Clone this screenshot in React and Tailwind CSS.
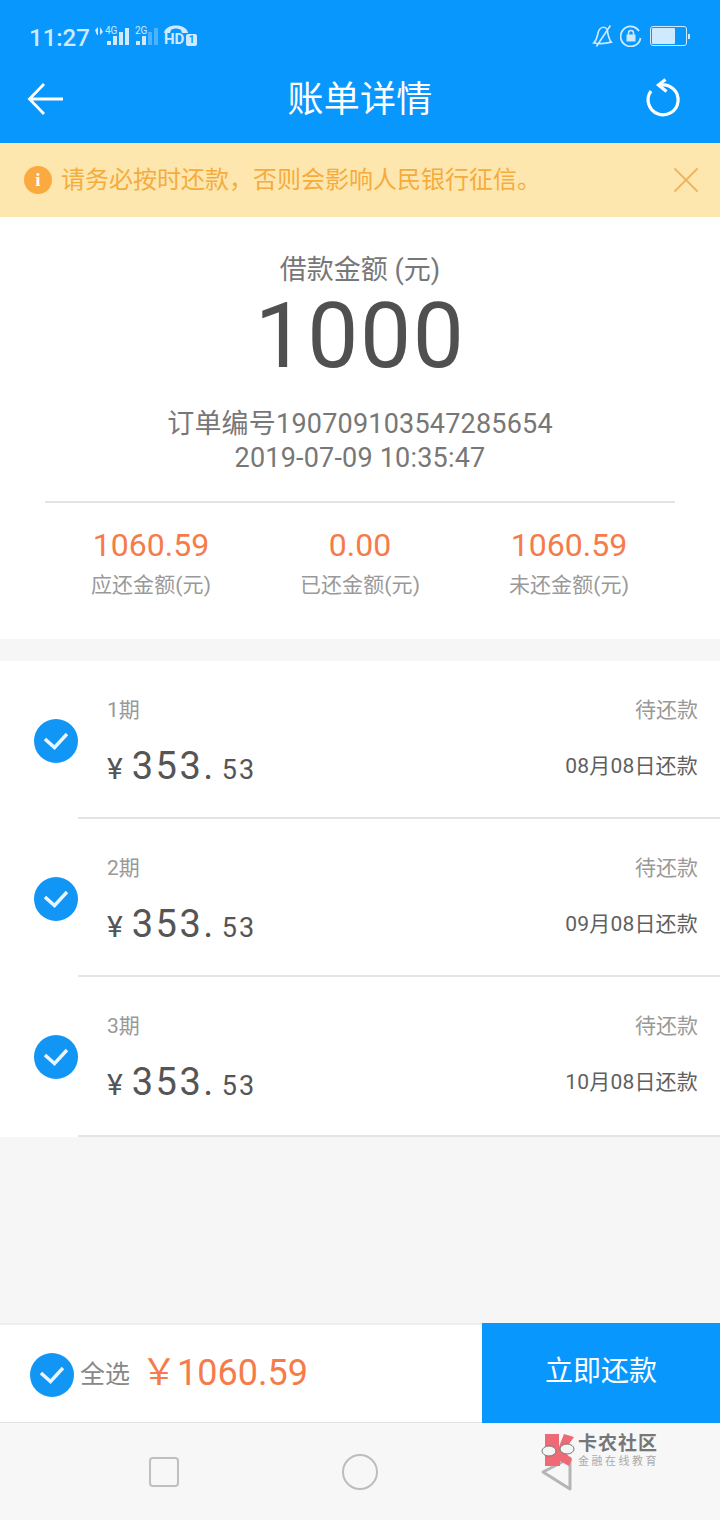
import React from 'react'
import { X } from 'lucide-react'

const periods = [
    { name: '1期', date: '08月08日还款' },
    { name: '2期', date: '09月08日还款' },
    { name: '3期', date: '10月08日还款' },
]

const summary = [
    { value: '1060.59', label: '应还金额(元)' },
    { value: '0.00', label: '已还金额(元)' },
    { value: '1060.59', label: '未还金额(元)' },
]

function CheckDot() {
    return (
        <div className="w-[44px] h-[44px] rounded-full bg-[#1196f5] flex items-center justify-center shrink-0">
            <svg width="24" height="18" viewBox="0 0 24 18" fill="none">
                <path d="M1 7 L10.5 15.5 L23 2" stroke="#e8f5ff" strokeWidth="3.4" />
            </svg>
        </div>
    )
}

function Signal({ levels }) {
    const heights = [4, 9, 13, 17]
    return (
        <svg width="22" height="17" viewBox="0 0 22 17" fill="#cfe9ff">
            {heights.map((h, i) => (
                <rect key={i} x={i * 6} y={17 - h} width="4" height={h} opacity={i < levels ? 1 : 0.35} />
            ))}
        </svg>
    )
}

function StatusBar() {
    return (
        <div className="h-[70px] flex items-start justify-between pl-[29px] pr-[30px] pt-[23px] text-[#cfe9ff]">
            <div className="flex items-start">
                <span className="w-[61px] text-[24px] leading-[30px] font-medium">11:27</span>
                <div className="relative ml-[5px] mt-[4px] w-[40px] h-[24px]">
                    <svg className="absolute left-0 top-0" width="8" height="8" viewBox="0 0 8 8" fill="#cfe9ff">
                        <path d="M0 3 L3 0 V8 H2 Z M5 0 L8 5 L5 8 Z" />
                    </svg>
                    <span className="absolute left-[10px] -top-[2px] text-[10px] leading-[12px]">4G</span>
                    <div className="absolute left-[12px] top-[1px]"><Signal levels={4} /></div>
                </div>
                <div className="relative mt-[4px] w-[24px] h-[24px]">
                    <span className="absolute left-0 -top-[2px] text-[10px] leading-[12px]">2G</span>
                    <div className="absolute left-[1px] top-[1px]"><Signal levels={2} /></div>
                </div>
                <div className="relative ml-[5px] mt-[2px] w-[33px] h-[24px]">
                    <svg className="absolute left-0 top-0" width="24" height="8" viewBox="0 0 24 8" fill="#cfe9ff">
                        <path d="M0 8 C1 -2 23 -2 24 8 L18 8 L17 5 C14 3 10 3 7 5 L6 8 Z" />
                    </svg>
                    <span className="absolute left-0 top-[6px] text-[15px] leading-[17px] font-bold">HD</span>
                    <span className="absolute left-[22px] top-[9px] w-[11px] h-[12px] bg-[#cfe9ff] text-[#0897fd] text-[10px] leading-[12px] font-bold text-center rounded-[2px]">1</span>
                </div>
            </div>
            <div className="flex items-center pt-[1px]">
                <svg width="21" height="24" viewBox="0 0 24 26" fill="none" stroke="#cfe9ff" strokeWidth="1.9">
                    <path d="M2 21 C6 17 6 13 7 9 C8 5 11 3 13 3 C16 3 18 6 18 10 C19 14 20 18 22 20 C15 22 8 22 2 21 Z" />
                    <path d="M21 1 L5 25" />
                </svg>
                <svg className="ml-[7px]" width="22" height="22" viewBox="0 0 22 22" fill="none">
                    <path d="M19 6 A10 10 0 1 0 20.5 13" stroke="#cfe9ff" strokeWidth="1.8" />
                    <rect x="6.5" y="9.5" width="9" height="7" fill="#cfe9ff" />
                    <path d="M8.5 10 V8 A2.5 2.5 0 0 1 13.5 8 V10" stroke="#cfe9ff" strokeWidth="1.5" />
                </svg>
                <div className="ml-[8px] w-[37px] h-[20px] rounded-[3px] border border-[#cfe9ff] p-[1px] flex">
                    <div className="w-[23px] h-full bg-[#cfe9ff] rounded-[1px]"></div>
                </div>
                <div className="w-[2px] h-[5px] bg-[#cfe9ff] ml-[1px]"></div>
            </div>
        </div>
    )
}

function App() {
    return (
        <div className="w-[720px] h-[1520px] flex flex-col bg-[#f6f6f6] overflow-hidden font-['Roboto','Noto_Sans_CJK_SC',sans-serif]">

            {/* HEADER */}
            <div className="h-[143px] bg-[#0897fd] shrink-0">
                <StatusBar />
                <div className="h-[73px] flex items-center pb-[16px]">
                    <div className="w-[100px] pl-[27px]">
                        <svg width="37" height="34" viewBox="0 0 37 34" fill="none" stroke="white" strokeWidth="2.8">
                            <path d="M36 17 H3 M17 2 L2.5 17 L17 32" />
                        </svg>
                    </div>
                    <span className="flex-1 mt-[3px] text-center text-[36px] leading-[44px] tracking-[0.3px] text-white">账单详情</span>
                    <div className="w-[100px] pr-[37px] flex justify-end">
                        <svg width="40" height="42" viewBox="0 0 40 42" fill="none" stroke="white" strokeWidth="3.2">
                            <path d="M8 13 A15 15 0 1 0 18 7" />
                            <path d="M22.5 1.5 L15.5 7 L23.5 13.5" />
                        </svg>
                    </div>
                </div>
            </div>

            {/* NOTICE */}
            <div className="h-[74px] bg-[#fde7ae] flex items-center pl-[24px] pr-[12px] shrink-0">
                <div className="w-[28px] h-[28px] rounded-full bg-[#fbaa3f] text-white flex items-center justify-center text-[19px] font-bold font-['Liberation_Serif',serif]">i</div>
                <span className="ml-[9px] text-[24px] text-[#f5ac3d] leading-[30px]">请务必按时还款，否则会影响人民银行征信。</span>
                <X size={44} strokeWidth={2} absoluteStrokeWidth className="ml-auto text-[#f0b560]" />
            </div>

            {/* LOAN INFO */}
            <div className="h-[422px] bg-white flex flex-col items-center shrink-0">
                <p className="mt-[36px] text-[27px] leading-[34px] text-[#777]">借款金额 (元)</p>
                <p className="mt-[4px] text-[91px] leading-[90px] text-[#505050] tracking-[1.5px]">1000</p>
                <p className="mt-[26px] text-[27px] leading-[34px] tracking-[0.2px] text-[#777]">订单编号190709103547285654</p>
                <p className="text-[27px] leading-[34px] tracking-[0.2px] text-[#777]">2019-07-09 10:35:47</p>
                <div className="mt-[26px] w-[630px] border-t-2 border-[#e4e4e4]"></div>
                <div className="mt-[22px] w-[626px] flex justify-between">
                    {summary.map((s) => (
                        <div key={s.label} className="w-[208px] flex flex-col items-center">
                            <span className="text-[32px] leading-[40px] text-[#f57c4a]">{s.value}</span>
                            <span className="mt-[6px] text-[21px] leading-[28px] tracking-[0.1px] text-[#999]">{s.label}</span>
                        </div>
                    ))}
                </div>
            </div>

            {/* PERIODS */}
            <div className="mt-[22px] bg-white shrink-0">
                {periods.map((p, index) => (
                    <div key={p.name} className="h-[158px] last:h-[160px] flex items-center pl-[34px]">
                        <div className={index === 2 ? "" : "pt-[2px]"}>
                            <CheckDot />
                        </div>
                        <div className="flex-1 h-full pl-[29px] pr-[22px] border-b-2 border-[#e4e4e4] flex justify-between">
                            <div className="pt-[35px]">
                                <p className="text-[21px] leading-[28px] text-[#999]">{p.name}</p>
                                <p className="mt-[18px] flex items-baseline text-[#555] leading-[48px]">
                                    <span className="text-[30px]">¥</span>
                                    <span className="ml-[9px] text-[38px] tracking-[2.5px]">353.</span>
                                    <span className="ml-[6px] text-[27px] tracking-[2px]">53</span>
                                </p>
                            </div>
                            <div className="pt-[35px] text-right">
                                <p className="text-[21px] leading-[28px] text-[#999]">待还款</p>
                                <p className="mt-[28px] text-[21px] leading-[28px] tracking-[0.2px] text-[#5f5f5f]">{p.date}</p>
                            </div>
                        </div>
                    </div>
                ))}
            </div>

            <div className="flex-1"></div>

            {/* FOOTER */}
            <div className="h-[100px] flex shrink-0">
                <div className="flex-1 flex items-center pl-[30px] pt-[3px] bg-white border-t-2 border-t-[#eeeeee] border-b border-b-[#e2e2e2]">
                    <CheckDot />
                    <span className="ml-[6px] text-[25px] text-[#888]">全选</span>
                    <span className="ml-[11px] mb-[4px] text-[36px] leading-[44px] text-[#f57c4a]">￥1060.59</span>
                </div>
                <div className="w-[238px] bg-[#0897fd] flex items-center justify-center pb-[2px] text-white text-[28px]">立即还款</div>
            </div>

            {/* ANDROID NAV */}
            <div className="relative h-[97px] bg-[#f7f7f7] shrink-0">
                <div className="flex h-full items-center">
                    <div className="ml-[149px] w-[30px] h-[30px] rounded-[4px] border-2 border-[#c0c0c0]"></div>
                    <div className="ml-[163px] w-[36px] h-[36px] rounded-full border-2 border-[#bdbdbd]"></div>
                    <svg className="ml-[162px]" width="36" height="40" viewBox="0 0 36 40" fill="none" stroke="#b5b5b5" strokeWidth="3" strokeLinejoin="round">
                        <path d="M3 20 L30 37 L30 6 Z" />
                    </svg>
                </div>

                {/* watermark */}
                <div className="absolute left-[541px] top-[10px] flex items-start">
                    <svg width="34" height="36" viewBox="0 0 34 36">
                        <path d="M4 1 H18 V14 L19 11 L23 1 L33 4 L26 14 L22 18 L31 26 L28 33 L19 28 V33 H4 Z" fill="#ee6a75" />
                        <ellipse cx="8" cy="18" rx="7" ry="5" fill="#f5f5f5" stroke="#777" />
                        <ellipse cx="26" cy="16" rx="7" ry="5" fill="#f5f5f5" stroke="#777" />
                    </svg>
                    <div className="ml-[3px] flex flex-col items-start">
                        <span className="text-[19px] leading-[22px] font-bold text-[#777] tracking-[1px]">卡农社区</span>
                        <span className="text-[11px] leading-[14px] text-[#aaa] tracking-[2.5px]">金融在线教育</span>
                    </div>
                </div>
            </div>
        </div>
    )
}

export default App
